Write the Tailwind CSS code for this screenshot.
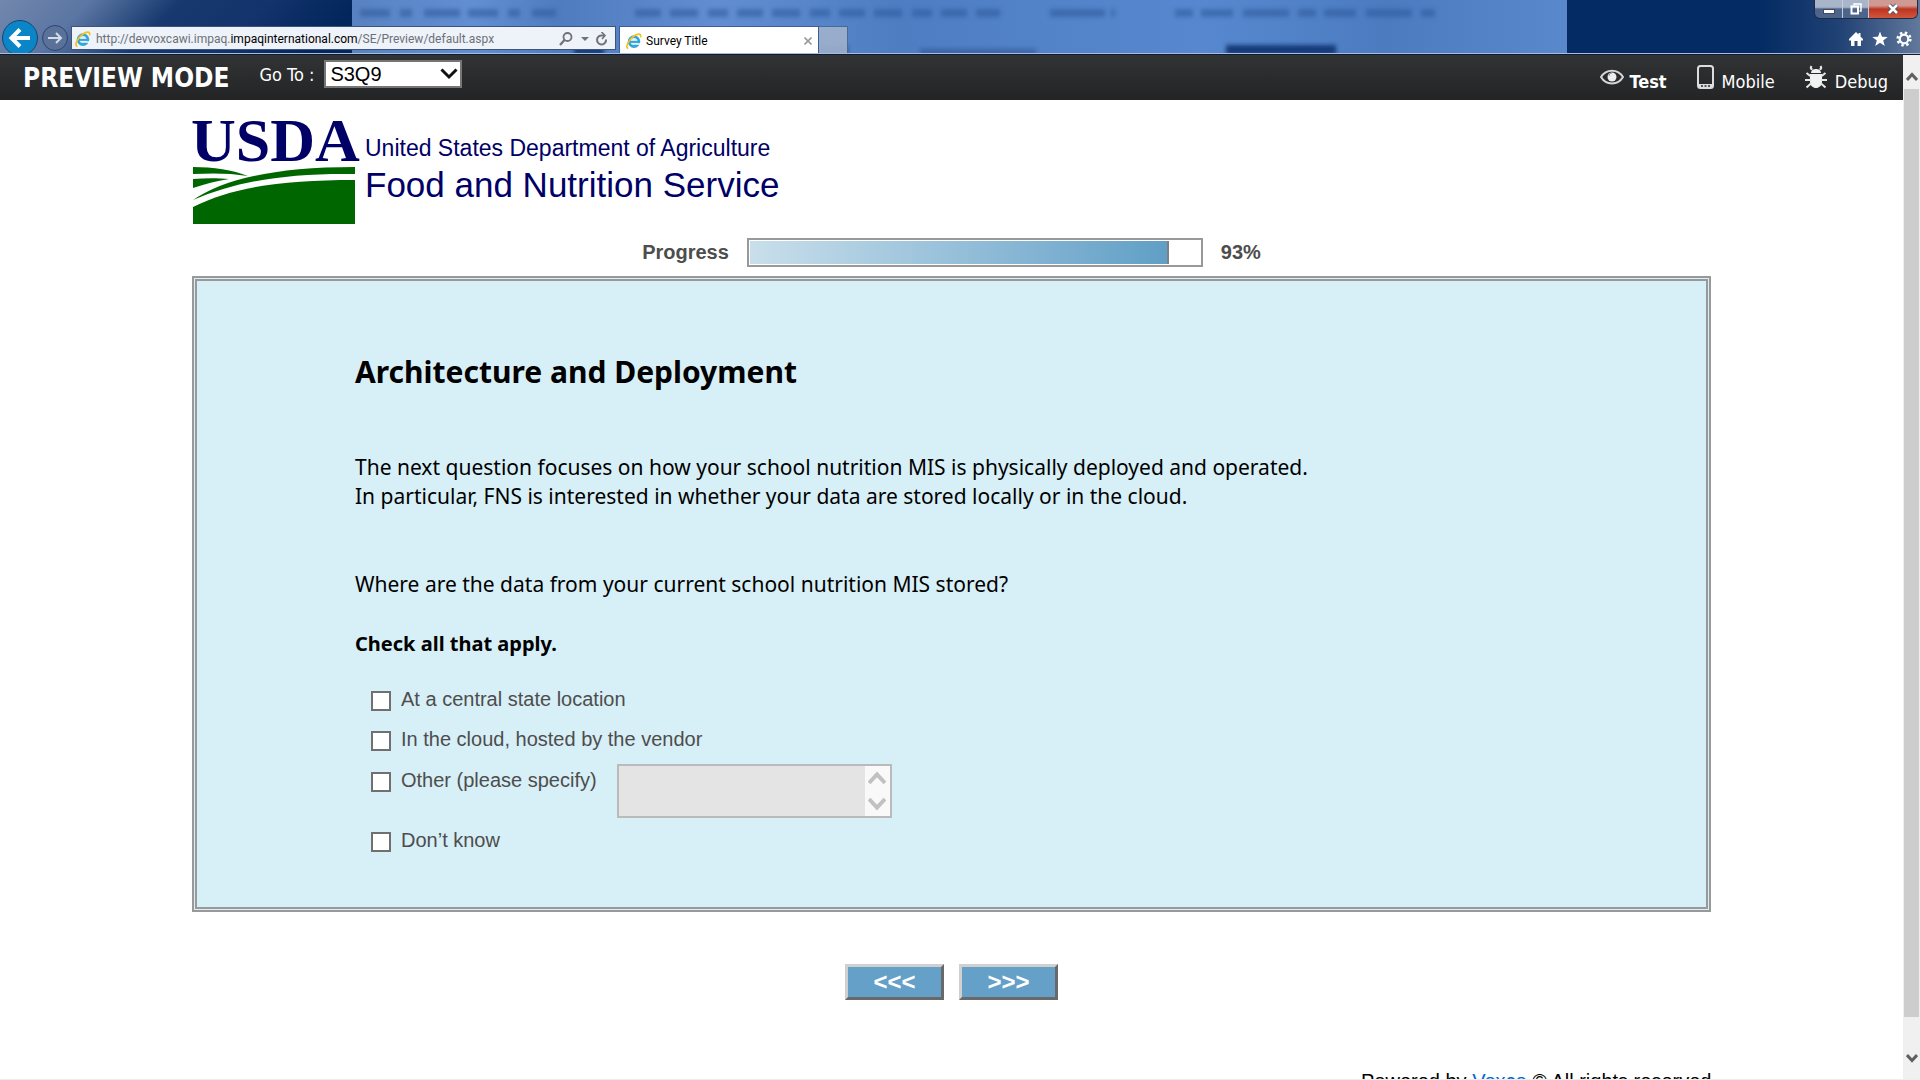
<!DOCTYPE html>
<html lang="en">
<head>
  <meta charset="UTF-8" />
  <meta name="viewport" content="width=device-width, initial-scale=1.0"/>
  <title>Survey Title</title>
  <script src="https://cdn.jsdelivr.net/npm/@tailwindcss/browser@4"></script>
</head>
<body class="h-screen overflow-hidden flex flex-col bg-white font-['Liberation_Sans',sans-serif] text-black">

<!-- shared icons -->
<svg class="hidden">
  <symbol id="ie" viewBox="0 0 16 16">
    <circle cx="8" cy="8.600" r="4.900" fill="#d9f1fb" stroke="#36a4dc" stroke-width="2.800" />
    <path d="M4 8.900h9.500" stroke="#36a4dc" stroke-width="2" />
    <path d="M9.500 10.200h6v1.600h-5z" fill="#fff" />
    <path d="M1.600 15.200C-.5 13 3 6.500 8 3c3.800-2.700 7-2.700 6.700.600" fill="none" stroke="#f5c21b" stroke-width="1.700" stroke-linecap="round" />
  </symbol>
</svg>

<!-- Browser window frame -->
<header class="relative h-[55px] shrink-0 flex items-end bg-[#5583c6] border-b border-[#0e1c33] font-['Roboto',sans-serif]">
  <svg class="absolute inset-0 w-full h-full" viewBox="0 0 1920 54" preserveAspectRatio="none">
    <defs>
      <linearGradient id="left" x1="0" y1="0" x2="1" y2="0.150">
        <stop offset="0" stop-color="#7287ad" />
        <stop offset="0.250" stop-color="#5b76a3" />
        <stop offset="0.500" stop-color="#17396f" />
        <stop offset="0.750" stop-color="#12336b" />
        <stop offset="1" stop-color="#03265d" />
      </linearGradient>
      <linearGradient id="mid" x1="0" y1="0" x2="1" y2="0">
        <stop offset="0" stop-color="#5882c2" />
        <stop offset="0.100" stop-color="#628fd2" />
        <stop offset="0.170" stop-color="#4f7cbf" />
        <stop offset="0.300" stop-color="#628ed1" />
        <stop offset="0.450" stop-color="#4e7dc2" />
        <stop offset="0.700" stop-color="#5788cf" />
        <stop offset="0.850" stop-color="#4c7bc0" />
        <stop offset="1" stop-color="#5a88cd" />
      </linearGradient>
      <linearGradient id="corner" gradientUnits="userSpaceOnUse" x1="1760" y1="20" x2="1920" y2="20">
        <stop offset="0" stop-color="#62789b" stop-opacity="0" />
        <stop offset="0.500" stop-color="#62789b" stop-opacity="0.300" />
        <stop offset="1" stop-color="#62789b" />
      </linearGradient>
      <filter id="soft" filterUnits="userSpaceOnUse" x="340" y="-10" width="1200" height="80"><feGaussianBlur stdDeviation="2" /></filter>
    </defs>
    <rect width="354" height="54" fill="url(#left)" />
    <rect x="352" width="1216" height="54" fill="url(#mid)" />
    <rect x="1567" width="353" height="54" fill="#042b64" />
    <rect x="1660" width="260" height="54" fill="url(#corner)" />
    <g filter="url(#soft)" stroke="#2f5c9f" stroke-width="8" opacity="0.600">
      <path d="M360 13H556" stroke-dasharray="30 10 12 12 36 8" />
      <path d="M635 13H1000" stroke-dasharray="26 9 28 10 20 9" />
      <path d="M1050 13h55m6 0h4" />
      <path d="M1175 13H1435" stroke-dasharray="18 8 32 10 46 9" />
    </g>
    <g filter="url(#soft)" fill="#123a79">
      <rect x="574" y="47" width="30" height="8" />
      <rect x="820" y="46" width="28" height="8" opacity="0.600" />
      <rect x="920" y="49" width="116" height="6" opacity="0.400" />
      <rect x="1226" y="45" width="110" height="10" />
    </g>
  </svg>

  <div class="relative w-full flex items-end h-[54px] border-b border-[#a9bddb] overflow-hidden">
    <button aria-label="Back" class="self-start mt-5 ml-0.5 w-9 h-9 shrink-0 rounded-full bg-[#0a86c8] border border-[#17456f] flex items-center justify-center">
      <svg class="w-6 h-6" viewBox="0 0 24 24" fill="none" stroke="#fff" stroke-width="4"><path d="M22 12H4M12 3.500L3.500 12l8.500 8.500" /></svg>
    </button>
    <button aria-label="Forward" class="self-start mt-[25px] ml-1 w-[26px] h-[26px] shrink-0 rounded-full bg-[#5a7199] border border-[#2c4570] flex items-center justify-center">
      <svg class="w-4 h-4" viewBox="0 0 16 16" fill="none" stroke="#d5dbe6" stroke-width="2"><path d="M1 8h13M9 3l5 5-5 5" /></svg>
    </button>
    <div class="ml-[3px] mb-[3px] w-[545px] h-6 shrink-0 flex items-center bg-[#eef2f9] border border-[#3c557e] pl-[3px] pr-1.5 pt-px">
      <svg class="w-4 h-4 shrink-0"><use href="#ie" /></svg>
      <div class="ml-[5px] flex-1 text-xs text-[#6d7178] whitespace-nowrap">http://devvoxcawi.impaq.<span class="text-black">impaqinternational.com</span>/SE/Preview/default.aspx</div>
      <button aria-label="Search"><svg class="w-4 h-4" viewBox="0 0 16 16" fill="none" stroke="#6f7379" stroke-width="1.800"><circle cx="10.500" cy="6" r="4" /><path d="M7.500 9L3 14" stroke-width="2.200" /></svg></button>
      <svg class="w-2 h-2 ml-2" viewBox="0 0 8 8"><path d="M0 2h8L4 6z" fill="#6f7379" /></svg>
      <button aria-label="Refresh" class="ml-1.5"><svg class="w-3.5 h-3.5" viewBox="0 0 14 14" fill="none" stroke="#6f7379" stroke-width="2"><path d="M11 7.500A4.500 4.500 0 1 1 7 3.500h2" /><path d="M6.500 0l3.500 3.500L7 7" stroke-width="1.600" /></svg></button>
    </div>
    <div class="ml-[3px] w-[200px] h-[27px] shrink-0 flex items-center bg-white border border-b-0 border-[#3c5f9a] px-1.5 pt-px">
      <svg class="w-4 h-4 shrink-0"><use href="#ie" /></svg>
      <span class="ml-1 flex-1 text-xs">Survey Title</span>
      <button aria-label="Close tab"><svg class="w-2 h-2" viewBox="0 0 8 8" stroke="#9a9a9a" stroke-width="1.600"><path d="M.500.500l7 7M7.500.500l-7 7" /></svg></button>
    </div>
    <button aria-label="New tab" class="w-[29px] h-[27px] shrink-0 bg-[#a0b0cc]/90 border border-b-0 border-l-0 border-[#4a689b]"></button>

    <div class="ml-auto self-start flex flex-col items-end pr-0.5">
      <div class="flex h-[19px] border border-t-0 border-[#1c2c4a] rounded-b-md overflow-hidden">
        <button aria-label="Minimize" class="w-7 flex justify-center items-center bg-linear-to-b from-[#a9b6ca] from-40% to-[#4e658b] to-50% border-r border-[#c3cddc]">
          <svg class="w-3 h-3 mt-1" viewBox="0 0 12 12"><rect x=".500" y="4.500" width="11" height="4" fill="#fff" stroke="#404a5c" /></svg>
        </button>
        <button aria-label="Restore" class="w-[26px] flex justify-center items-center bg-linear-to-b from-[#a9b6ca] from-40% to-[#4e658b] to-50% border-r border-[#c3cddc]">
          <svg class="w-3 h-3" viewBox="0 0 12 12" fill="none" stroke="#fff" stroke-width="1.500"><path d="M4 2.500V1h7v7H9.500" /><rect x="1.500" y="3.500" width="6.500" height="7" stroke-width="2" /></svg>
        </button>
        <button aria-label="Close" class="w-12 flex justify-center items-center bg-linear-to-b from-[#d09a94] from-30% via-[#bd3420] via-50% to-[#d0563c]">
          <svg class="w-3 h-3" viewBox="0 0 12 12"><path d="M2 2l8 8M10 2l-8 8" stroke="#4b4f62" stroke-width="4.500" /><path d="M2 2l8 8M10 2l-8 8" stroke="#fff" stroke-width="2.600" /></svg>
        </button>
      </div>
      <div class="flex gap-2 mt-3 pr-1.5">
        <button aria-label="Home"><svg class="w-4 h-4" viewBox="0 0 16 16" fill="#fff"><path d="M8 1L1 8v1.500h2V15h3.500v-5h3v5H13V9.500h2V8l-2.500-2.500V2h-2v1.500z" /></svg></button>
        <button aria-label="Favorites"><svg class="w-4 h-4" viewBox="0 0 16 16" fill="#fff"><path d="M8 .500l2 5.300 5.700.200-4.500 3.500 1.600 5.500L8 11.800 3.200 15l1.600-5.500L.300 6 6 5.800z" /></svg></button>
        <button aria-label="Tools"><svg class="w-4 h-4" viewBox="0 0 16 16" fill="none" stroke="#fff"><circle cx="8" cy="8" r="4.300" stroke-width="2.200" /><circle cx="8" cy="8" r="6.400" stroke-width="2.400" stroke-dasharray="2.500 2.526" /></svg></button>
      </div>
    </div>
  </div>
</header>

<div class="flex flex-1 min-h-0 border-b border-[#eeeeee]">
  <div class="flex-1 min-w-0 overflow-hidden">

    <!-- Preview bar -->
    <nav class="h-[45px] flex items-center bg-linear-to-b from-[#313335] to-[#232426] text-white font-['DejaVu_Sans_Condensed','DejaVu_Sans',sans-serif] pl-[23px] pr-[15px]">
      <h1 class="font-bold text-[26px] pt-0.5">PREVIEW MODE</h1>
      <label for="goto" class="ml-[30px] mb-1.5 text-lg">Go To :</label>
      <div class="relative ml-2.5 mb-2">
        <select id="goto" class="appearance-none block w-[138px] h-7 pl-1 bg-white text-black border-2 border-[#767676] font-['Liberation_Sans',sans-serif] text-xl leading-6">
          <option>S3Q9</option>
        </select>
        <svg class="absolute right-1 top-2 w-[18px] h-3 pointer-events-none" viewBox="0 0 18 12" fill="none" stroke="#111" stroke-width="3"><path d="M1.500 1.500L9 9l7.500-7.500" /></svg>
      </div>

      <div class="ml-auto pt-2 flex items-center gap-[30px] text-lg">
        <a href="#test" class="flex items-center gap-1.5 font-bold">
          <svg class="w-6 h-4 mb-2.5" viewBox="0 0 24 16"><path d="M1 8C6-.500 18-.500 23 8 18 16.500 6 16.500 1 8z" fill="none" stroke="#d6d6d6" stroke-width="2" /><circle cx="12" cy="8" r="4.500" fill="#eee" /><path d="M9 7a3 3 0 0 1 3-3" stroke="#999" fill="none" /></svg>
          Test
        </a>
        <a href="#mobile" class="flex items-center gap-2">
          <svg class="w-[17px] h-6 mb-2.5" viewBox="0 0 17 24"><rect x="1" y="1" width="15" height="22" rx="2.500" fill="none" stroke="#ddd" stroke-width="2" /><path d="M1 19h15v4H1z" fill="#ddd" /><path d="M4 21h2m1.500 0h2m1.500 0h2" stroke="#2a2b2d" stroke-width="1.500" /></svg>
          Mobile
        </a>
        <a href="#debug" class="flex items-center gap-2">
          <svg class="w-[22px] h-6 mb-2.5" viewBox="0 0 22 24" fill="#f2f2f2" stroke="#e6e6e6">
            <path d="M7.500 4.500C5.500 4 5.500 2.500 6.500 1M14.500 4.500c2-.500 2-2 1-3.500" fill="none" stroke-width="2.200" />
            <path d="M6 8C6 2.500 16 2.500 16 8z" stroke="none" />
            <path d="M5 9h12v8c0 3.500-3 6-6 6s-6-2.500-6-6z" stroke="none" />
            <path d="M6 11.500L1.500 8M16 11.500L20.500 8M6 15H0M16 15h6M6 18.500l-4.500 4M16 18.500l4.500 4" fill="none" stroke-width="2" />
          </svg>
          Debug
        </a>
      </div>
    </nav>

    <main class="max-w-[1519px] mx-auto">
      <!-- Agency logo -->
      <div class="pt-3 flex gap-[9px] text-[#000066]">
        <svg class="w-[164px] h-[113px] shrink-0 overflow-visible" viewBox="0 0 164 113" role="img" aria-label="USDA">
          <text x="-1" y="49" font-family="Liberation Serif, serif" font-weight="bold" font-size="62" fill="#000066">USDA</text>
          <g fill="#006600">
            <path d="M1 55c20 0 40 3 55 9-18-3-36-3-55-2z" />
            <path d="M1 67c12-1 25-1 36 0-13 2-24 5-36 9z" />
            <path d="M1 88C30 68 80 55 163 55v7C95 61 45 69 1 88z" />
            <path d="M1 95C40 75 90 68 163 68v44H1z" />
          </g>
        </svg>
        <div class="pt-[22px] whitespace-nowrap">
          <p class="text-[23px] leading-7">United States Department of Agriculture</p>
          <p class="text-[35px] leading-[46px]">Food and Nutrition Service</p>
        </div>
      </div>

      <!-- Progress -->
      <div class="mt-[13px] flex justify-center items-start text-xl leading-7 font-bold text-[#4d4d4d]">
        <span id="progress-label">Progress</span>
        <div role="progressbar" aria-labelledby="progress-label" aria-valuenow="93" aria-valuemin="0" aria-valuemax="100" class="mx-[18px] w-[456px] h-[29px] border-2 border-[#999999] py-px pl-px bg-white">
          <div class="h-full bg-linear-to-r from-[#c9dfeb] to-[#609fc6] border-r-2 border-[#808080]" style="width: 93%"></div>
        </div>
        <span>93%</span>
      </div>

      <!-- Question -->
      <form id="survey">
        <section class="mt-[9px] h-[636px] border-5 border-double border-[#999999] bg-[#d7eff7] pl-[158px] pt-[71px] font-['Noto_Sans',sans-serif] text-[21px] leading-[29px]">
          <h2 class="text-[30px] leading-10 font-bold">Architecture and Deployment</h2>
          <p class="mt-[61px]">The next question focuses on how your school nutrition MIS is physically deployed and operated.<br>In particular, FNS is interested in whether your data are stored locally or in the cloud.</p>
          <p class="mt-[59px]">Where are the data from your current school nutrition MIS stored?</p>
          <p class="mt-[30px] text-xl leading-[29px] font-bold">Check all that apply.</p>

          <div class="mt-[29px] ml-4 font-['Liberation_Sans',sans-serif] text-xl leading-6 text-[#4d4d4d]">
            <div class="flex items-start h-10">
              <input id="central" type="checkbox" class="appearance-none w-5 h-5 mt-1 mr-2.5 bg-white border-2 border-[#707070]">
              <label for="central">At a central state location</label>
            </div>
            <div class="flex items-start h-[41px]">
              <input id="cloud" type="checkbox" class="appearance-none w-5 h-5 mt-1 mr-2.5 bg-white border-2 border-[#707070]">
              <label for="cloud">In the cloud, hosted by the vendor</label>
            </div>
            <div class="flex items-start h-[60px]">
              <input id="other" type="checkbox" class="appearance-none w-5 h-5 mt-1 mr-2.5 bg-white border-2 border-[#707070]">
              <label for="other">Other (please specify)</label>
              <div class="-mt-1 ml-5 flex w-[275px] h-[54px] border-2 border-[#bababa] bg-[#e4e4e4]">
                <textarea aria-label="Other (please specify)" disabled class="flex-1 min-w-0 resize-none"></textarea>
                <div class="w-[25px] bg-[#f9f9f9] flex flex-col items-center justify-between py-[5px]">
                  <svg class="w-[18px] h-3.5" viewBox="0 0 18 14" fill="none" stroke="#c1c1c1" stroke-width="4"><path d="M1 12l8-8.500 8 8.500" /></svg>
                  <svg class="w-[18px] h-3.5" viewBox="0 0 18 14" fill="none" stroke="#c1c1c1" stroke-width="4"><path d="M1 2l8 8.500L17 2" /></svg>
                </div>
              </div>
            </div>
            <div class="flex items-start h-10">
              <input id="unknown" type="checkbox" class="appearance-none w-5 h-5 mt-1 mr-2.5 bg-white border-2 border-[#707070]">
              <label for="unknown">Don’t know</label>
            </div>
          </div>
        </section>

        <div class="mt-[52px] flex justify-center gap-[15px] text-2xl leading-7 font-bold text-white">
          <button type="button" class="w-[99px] h-9 bg-[#64a0c8] border-3 border-t-[#d0d0d0] border-l-[#d0d0d0] border-r-[#696969] border-b-[#696969]">&lt;&lt;&lt;</button>
          <button type="button" class="w-[99px] h-9 bg-[#64a0c8] border-3 border-t-[#d0d0d0] border-l-[#d0d0d0] border-r-[#696969] border-b-[#696969]">&gt;&gt;&gt;</button>
        </div>
      </form>

      <footer class="mt-[69px] -mr-1.5 text-right text-xl leading-6">Powered by <a href="#voxco" class="text-[#0066dd]">Voxco</a> © All rights reserved.</footer>
    </main>
  </div>

  <!-- Scrollbar -->
  <div class="w-[17px] shrink-0 bg-[#f0f0f0] flex flex-col items-center">
    <svg class="w-3 h-[34px]" viewBox="0 0 12 34" fill="none" stroke="#606060" stroke-width="3"><path d="M1 25l5-5.500 5 5.500" /></svg>
    <div class="w-[15px] flex-1 bg-[#cdcdcd]"></div>
    <svg class="w-3 h-[62px]" viewBox="0 0 12 62" fill="none" stroke="#606060" stroke-width="3"><path d="M1 38l5 5.500 5-5.500" /></svg>
  </div>
</div>

</body>
</html>
